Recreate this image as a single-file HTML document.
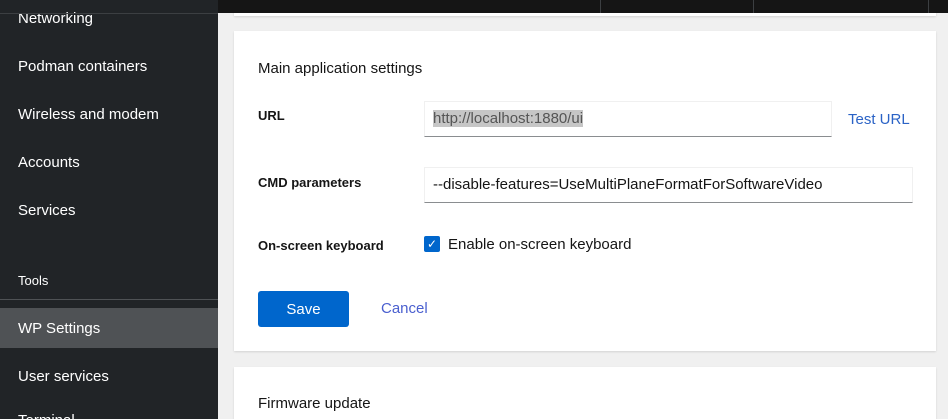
<!DOCTYPE html>
<html><head><style>
*{box-sizing:border-box;margin:0;padding:0}
html,body{width:948px;height:419px;overflow:hidden}
body{background:#f0f0f0;font-family:"Liberation Sans",sans-serif;position:relative}
.sb{position:absolute;left:0;top:0;width:218px;height:419px;background:#212427;color:#fff;font-size:15px;overflow:hidden}
.sb div{position:absolute;left:18px}
.top{position:absolute;left:218px;top:0;width:730px;height:13px;background:#151515}
.top i{position:absolute;top:0;width:1px;height:13px;background:#3c3f42}
.card{position:absolute;left:234px;width:702px;background:#fff;box-shadow:0 1px 2px rgba(0,0,0,.12)}
.lbl{position:absolute;left:24px;font-size:13px;font-weight:bold;color:#151515}
.inp{position:absolute;height:36px;border:1px solid #f0f0f0;border-bottom:1px solid #8a8d90;font-size:15px;color:#151515;padding:8px 8px}
</style></head><body>
<div class="sb">
<div style="top:10px">Networking</div>
<div style="left:0;width:218px;height:1px;top:13px;background:#3c3f42"></div>
<div style="top:58px">Podman containers</div>
<div style="top:106px">Wireless and modem</div>
<div style="top:154px">Accounts</div>
<div style="top:202px">Services</div>
<div style="top:273px;font-size:13px">Tools</div>
<div style="left:0;top:299px;width:218px;height:1px;background:#4f5255"></div>
<div style="left:0;top:308px;width:218px;height:40px;background:#4f5255"></div>
<div style="top:320px">WP Settings</div>
<div style="top:368px">User services</div>
<div style="top:412px">Terminal</div>
</div>
<div class="card" style="top:0;height:16px;"></div>
<div class="top"><i style="left:382px"></i><i style="left:535px"></i><i style="left:710px"></i></div>
<div class="card" style="top:31px;height:320px">
<div style="position:absolute;left:24px;top:29px;font-size:15px;color:#151515">Main application settings</div>
<div class="lbl" style="top:77px">URL</div>
<div class="inp" style="left:190px;top:70px;width:408px;color:#555"><span style="background:#c6c6c6">http://localhost:1880/ui</span></div>
<div style="position:absolute;left:614px;top:80px;font-size:15px;color:#2b63c6">Test URL</div>
<div class="lbl" style="top:144px">CMD parameters</div>
<div class="inp" style="left:190px;top:136px;width:489px">--disable-features=UseMultiPlaneFormatForSoftwareVideo</div>
<div class="lbl" style="top:207px">On-screen keyboard</div>
<div style="position:absolute;left:190px;top:205px;width:16px;height:16px;background:#0066cc;border-radius:2px;color:#fff;font-size:12px;line-height:16px;text-align:center">✓</div>
<div style="position:absolute;left:214px;top:205px;font-size:15px;color:#151515">Enable on-screen keyboard</div>
<div style="position:absolute;left:24px;top:260px;width:91px;height:36px;background:#0066cc;border-radius:3px;color:#fff;font-size:15px;text-align:center;line-height:37px">Save</div>
<div style="position:absolute;left:147px;top:269px;font-size:15px;color:#4a5fcf">Cancel</div>
</div>
<div class="card" style="top:367px;height:60px">
<div style="position:absolute;left:24px;top:28px;font-size:15px;color:#151515">Firmware update</div>
</div>
</body></html>
